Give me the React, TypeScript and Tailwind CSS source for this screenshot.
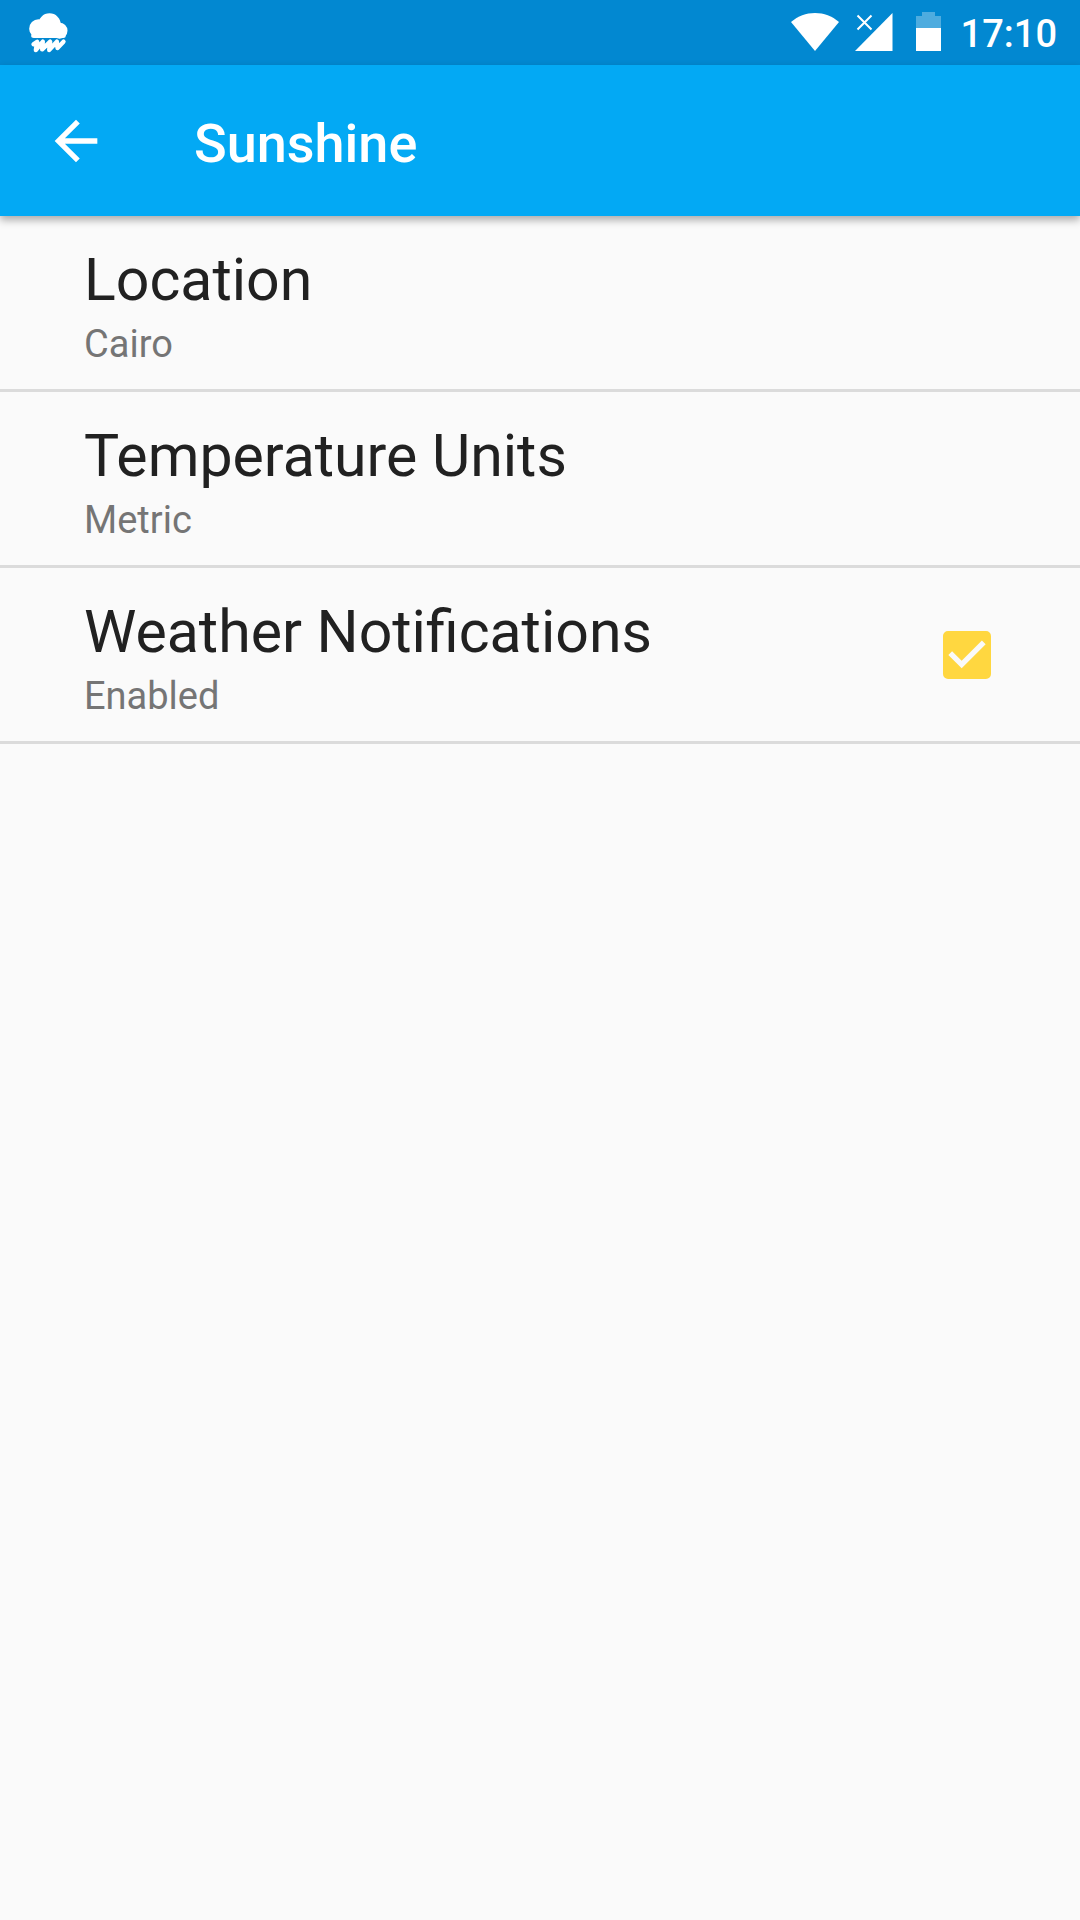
import { useState } from "react";

function RainIcon() {
  return (
    <svg viewBox="88 38 116 120" className="h-10 w-[39px]" fill="currentColor" aria-hidden="true">
      <circle cx="116" cy="85" r="28" />
      <circle cx="149" cy="73" r="34" />
      <circle cx="179" cy="91" r="24" />
      <rect x="112" y="84" width="70" height="29" />
      <rect x="94" y="100" width="104" height="13" rx="8" />
      <path
        d="M101 132 112 124 108 149 129 124 127 147 151 124 148 149 171 124 173 143 191 124"
        fill="none"
        stroke="currentColor"
        strokeWidth="13"
        strokeLinecap="round"
        strokeLinejoin="round"
      />
    </svg>
  );
}

function WifiIcon() {
  return (
    <svg viewBox="0 0 48 38" className="h-[38px] w-12" fill="currentColor" aria-hidden="true">
      <path d="M0 9C7 3 15 0 24 0s17 3 24 9L24 38Z" />
    </svg>
  );
}

function SignalIcon() {
  return (
    <svg viewBox="0 0 38 38" className="h-[38px] w-[38px]" aria-hidden="true">
      <path d="M0 38 37.500 0V38Z" fill="currentColor" />
      <path d="m2.500 2.500 14 14m0-14-14 14" stroke="currentColor" strokeWidth="2" fill="none" />
    </svg>
  );
}

function BatteryIcon() {
  return (
    <svg viewBox="0 0 25 39" className="h-[39px] w-[25px]" fill="currentColor" aria-hidden="true">
      <path d="M6 0h13v4h6v12H0V4h6Z" opacity="0.3" />
      <path d="M0 16h25v23H0Z" />
    </svg>
  );
}

const titleClass = "block text-[59px] leading-[78px] text-[#212121]";
const summaryClass = "block text-[38px] leading-[50px] text-[#757575]";

function Preference({ title, summary }: { title: string; summary: string }) {
  return (
    <li className="border-b-3 border-[#dbdbdb]">
      <button type="button" className="block w-full px-[84px] pt-[25px] pb-5 text-left">
        <span className={titleClass}>{title}</span>
        <span className={summaryClass}>{summary}</span>
      </button>
    </li>
  );
}

function CheckPreference({ title }: { title: string }) {
  const [checked, setChecked] = useState(true);
  return (
    <li className="border-b-3 border-[#dbdbdb]">
      <label className="flex w-full items-center justify-between pr-[81px] pl-[84px]">
        <span className="block pt-[25px] pb-5">
          <span className={titleClass}>{title}</span>
          <span className={summaryClass}>{checked ? "Enabled" : "Disabled"}</span>
        </span>
        <span className="grid size-16 shrink-0 place-items-center">
          <input
            type="checkbox"
            checked={checked}
            onChange={(e) => setChecked(e.target.checked)}
            className="peer col-start-1 row-start-1 size-12 appearance-none rounded-[5px] border-[5px] border-[#757575] checked:border-[#ffd740] checked:bg-[#ffd740]"
          />
          <svg
            viewBox="0 0 24 24"
            className="pointer-events-none invisible col-start-1 row-start-1 size-16 peer-checked:visible"
            fill="#fafafa"
            aria-hidden="true"
          >
            <path d="m10 17-5-5 1.410-1.410L10 14.170l7.590-7.590L19 8Z" />
          </svg>
        </span>
      </label>
    </li>
  );
}

export default function App() {
  return (
    <div className="min-h-screen bg-[#fafafa] font-['Roboto',sans-serif]">
      <div className="flex h-[65px] items-center justify-between bg-[#0288d1] pr-[23px] pl-[29px] text-white">
        <RainIcon />
        <div className="flex items-center">
          <div className="flex items-end pb-0.5">
            <WifiIcon />
            <span className="ml-4">
              <SignalIcon />
            </span>
            <span className="ml-[23px]">
              <BatteryIcon />
            </span>
          </div>
          <time className="ml-5 pt-0.5 text-[38px] leading-[46px] font-medium">17:10</time>
        </div>
      </div>
      <header className="relative flex h-[151px] items-center bg-[#03a9f4] pl-11 text-white shadow-[0_4px_8px_rgba(0,0,0,0.32)]">
        <button type="button" aria-label="Back" className="size-16">
          <svg viewBox="0 0 24 24" className="size-16" fill="currentColor" aria-hidden="true">
            <path d="M20 11H7.830l5.590-5.590L12 4l-8 8 8 8 1.410-1.410L7.830 13H20Z" />
          </svg>
        </button>
        <h1 className="ml-[86px] pt-1.5 text-[54px] leading-[64px] font-medium">Sunshine</h1>
      </header>
      <main>
        <ul>
          <Preference title="Location" summary="Cairo" />
          <Preference title="Temperature Units" summary="Metric" />
          <CheckPreference title="Weather Notifications" />
        </ul>
      </main>
    </div>
  );
}
